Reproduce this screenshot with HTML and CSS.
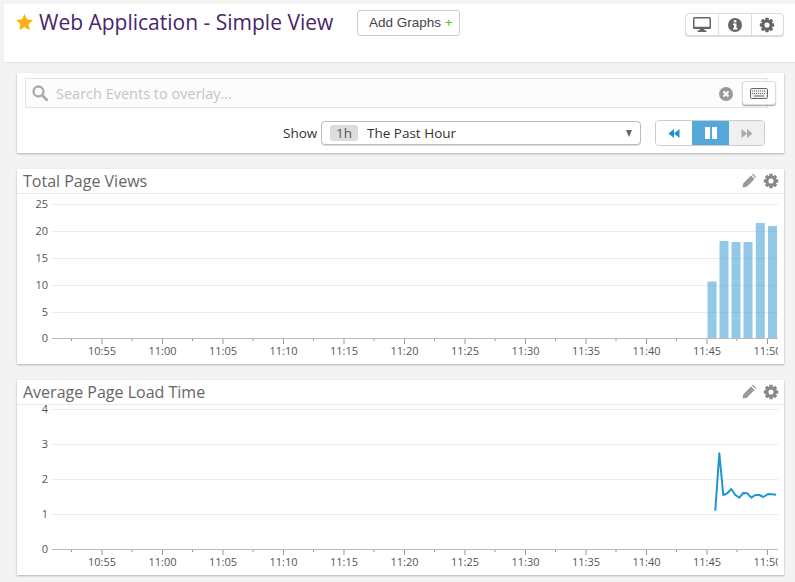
FILE: index.html
```html
<!DOCTYPE html>
<html lang="en">
<head>
<meta charset="utf-8">
<title>Web Application - Simple View</title>
<link rel="stylesheet" href="styles.css">
</head>
<body>
<svg class="defs" width="0" height="0" aria-hidden="true">
  <symbol id="gear" viewBox="0 0 20 20">
    <circle cx="10" cy="10" r="5.2" fill="none" stroke="currentColor" stroke-width="3.6"/>
    <g fill="currentColor">
      <rect x="7.9" y="1" width="4.2" height="18" rx=".7"/>
      <rect x="7.9" y="1" width="4.2" height="18" rx=".7" transform="rotate(45 10 10)"/>
      <rect x="7.9" y="1" width="4.2" height="18" rx=".7" transform="rotate(90 10 10)"/>
      <rect x="7.9" y="1" width="4.2" height="18" rx=".7" transform="rotate(135 10 10)"/>
    </g>
    <circle cx="10" cy="10" r="3.2" fill="var(--hole, #fff)"/>
  </symbol>
  <symbol id="pencil" viewBox="0 0 16 16">
    <path fill="currentColor" d="M.5 15.500l1-5L10.300 1.700l4 4L5.500 14.500zM11.300.7l.4-.3c.5-.4 1.100-.4 1.500 0l2.400 2.400c.4.4.4 1 0 1.500l-.3.4z"/>
  </symbol>
</svg>

<header class="topbar">
  <svg class="star" viewBox="0 0 18 17"><path fill="#fbb117" d="M9 0l2.700 5.700 6.300.8-4.600 4.300 1.200 6.200L9 14l-5.600 3 1.200-6.200L0 6.500l6.300-.8z"/></svg>
  <h1 class="page-title">Web Application - Simple View</h1>
  <button class="add-btn">Add Graphs <span class="plus">+</span></button>
  <div class="tool-group">
    <span class="tool">
      <svg width="18" height="15" viewBox="0 0 24 20"><path fill="#666" d="M2 0h20a2 2 0 0 1 2 2v12a2 2 0 0 1-2 2h-7l.5 2H18v2H6v-2h2.500l.5-2H2a2 2 0 0 1-2-2V2a2 2 0 0 1 2-2zm0 2v11h20V2z"/></svg>
    </span>
    <span class="tool">
      <svg width="14" height="14" viewBox="0 0 15 15"><circle cx="7.500" cy="7.500" r="7.500" fill="#666"/><rect x="6.200" y="2.300" width="2.800" height="2.400" fill="#fff"/><path fill="#fff" d="M5.400 6h3.700v4.600h1v1.600H5.400v-1.600h1V7.500h-1z"/></svg>
    </span>
    <span class="tool"><svg class="gear-lg"><use href="#gear"/></svg></span>
  </div>
</header>

<section class="card controls">
  <div class="search">
    <svg class="search-icon" viewBox="0 0 16 16"><circle cx="6.500" cy="6.500" r="5" fill="none" stroke="#aaa" stroke-width="2.300"/><path d="M10.200 10.200l4.500 4.500" stroke="#aaa" stroke-width="2.800" stroke-linecap="round"/></svg>
    <span class="placeholder">Search Events to overlay...</span>
    <svg class="clear-icon" viewBox="0 0 14 14"><circle cx="7" cy="7" r="7" fill="#999"/><path d="M4.500 4.500l5 5M9.500 4.500l-5 5" stroke="#fff" stroke-width="2"/></svg>
    <span class="kbd-btn">
      <svg width="18" height="11" viewBox="0 0 18 11"><rect x=".5" y=".5" width="17" height="10" rx="1" fill="#eee" stroke="#666"/><path d="M2 3h14M2 5.500h14" stroke="#666" stroke-dasharray="1 1"/><path d="M4 8h10" stroke="#666"/></svg>
    </span>
  </div>
  <div class="show-row">
    <span class="show-label">Show</span>
    <div class="select">
      <span class="pill">1h</span>
      <span class="select-text">The Past Hour</span>
      <span class="caret"></span>
    </div>
    <div class="player">
      <span class="pl pl-back"><svg width="12" height="11" viewBox="0 0 12 12"><path fill="#1f8fcf" d="M6 1v10L0 6zM12 1v10L6 6z"/></svg></span>
      <span class="pl pl-pause"><svg width="12" height="12" viewBox="0 0 12 12"><path fill="#fff" d="M0 0h5v12H0zM7 0h5v12H7z"/></svg></span>
      <span class="pl pl-next"><svg width="12" height="11" viewBox="0 0 12 12"><path fill="#aaa" d="M0 1v10l6-5zM6 1v10l6-5z"/></svg></span>
    </div>
  </div>
</section>

<section class="card graph">
  <div class="graph-head">
    <h2 class="graph-title">Total Page Views</h2>
    <svg class="pencil"><use href="#pencil"/></svg>
    <svg class="gear-sm"><use href="#gear"/></svg>
  </div>
  <svg class="plot" viewBox="17 194 767 170">
    <defs><clipPath id="clip1"><rect x="17" y="194" width="761" height="170"/></clipPath></defs>
    <g class="grid">
      <path d="M52 204.500H778M52 231.500H778M52 258.500H778M52 285.500H778M52 312.500H778"/>
    </g>
    <g class="ylab">
      <text x="48" y="208">25</text><text x="48" y="235">20</text><text x="48" y="262">15</text><text x="48" y="289">10</text><text x="48" y="316">5</text><text x="48" y="342">0</text>
    </g>
    <g class="bars">
      <rect x="707.500" y="281.500" width="9" height="57"/>
      <rect x="719.500" y="241" width="9" height="97.500"/>
      <rect x="731.500" y="242" width="9" height="96.500"/>
      <rect x="743.500" y="242" width="9" height="96.500"/>
      <rect x="755.800" y="223" width="9" height="115.500"/>
      <rect x="768" y="226" width="9" height="112.500"/>
    </g>
    <path class="axis" d="M52 338.500H778"/>
    <path class="ticks" d="M102 339v5M162.500 339v5M223 339v5M283.500 339v5M344 339v5M404.500 339v5M465 339v5M525.500 339v5M586 339v5M646.500 339v5M707 339v5M767.500 339v5M71.500 339v2M132 339v2M192.500 339v2M253 339v2M313.500 339v2M374 339v2M434.500 339v2M495 339v2M555.500 339v2M616 339v2M676.500 339v2M737 339v2"/>
    <g class="xlab" clip-path="url(#clip1)">
      <text x="102" y="355">10:55</text><text x="162.500" y="355">11:00</text><text x="223" y="355">11:05</text><text x="283.500" y="355">11:10</text><text x="344" y="355">11:15</text><text x="404.500" y="355">11:20</text><text x="465" y="355">11:25</text><text x="525.500" y="355">11:30</text><text x="586" y="355">11:35</text><text x="646.500" y="355">11:40</text><text x="707" y="355">11:45</text><text x="767.500" y="355">11:50</text>
    </g>
  </svg>
</section>

<section class="card graph">
  <div class="graph-head">
    <h2 class="graph-title">Average Page Load Time</h2>
    <svg class="pencil"><use href="#pencil"/></svg>
    <svg class="gear-sm"><use href="#gear"/></svg>
  </div>
  <svg class="plot" viewBox="17 405 767 170">
    <defs><clipPath id="clip2"><rect x="17" y="400" width="761" height="175"/></clipPath></defs>
    <g class="grid">
      <path d="M52 409.500H778M52 444.500H778M52 479.500H778M52 514.500H778"/>
    </g>
    <g class="ylab">
      <text x="48" y="413">4</text><text x="48" y="448">3</text><text x="48" y="483">2</text><text x="48" y="518">1</text><text x="48" y="553">0</text>
    </g>
    <path class="axis" d="M52 549.500H778"/>
    <path class="ticks" d="M102 550v5M162.500 550v5M223 550v5M283.500 550v5M344 550v5M404.500 550v5M465 550v5M525.500 550v5M586 550v5M646.500 550v5M707 550v5M767.500 550v5M71.500 550v2M132 550v2M192.500 550v2M253 550v2M313.500 550v2M374 550v2M434.500 550v2M495 550v2M555.500 550v2M616 550v2M676.500 550v2M737 550v2"/>
    <polyline class="line" points="715.300,510.700 719.300,453.300 723.300,495 727.300,493.300 731.300,489 735.300,495 739.300,497.700 743.300,493 747.300,493.300 751.300,497.700 755.300,495 759.300,495 763.300,497 768,494 772,494.300 776,494.700"/>
    <g class="xlab" clip-path="url(#clip2)">
      <text x="102" y="566">10:55</text><text x="162.500" y="566">11:00</text><text x="223" y="566">11:05</text><text x="283.500" y="566">11:10</text><text x="344" y="566">11:15</text><text x="404.500" y="566">11:20</text><text x="465" y="566">11:25</text><text x="525.500" y="566">11:30</text><text x="586" y="566">11:35</text><text x="646.500" y="566">11:40</text><text x="707" y="566">11:45</text><text x="767.500" y="566">11:50</text>
    </g>
  </svg>
</section>
</body>
</html>
```

FILE: styles.css
```css
* { box-sizing: border-box; }
html, body { height: 100%; overflow: hidden; }
body {
  margin: 0;
  padding: 4px 0 0 0;
  background: #f3f3f3;
  font-family: "Open Sans", "Liberation Sans", sans-serif;
  color: #444;
}
.defs { position: absolute; }

.topbar {
  display: flex;
  align-items: flex-start;
  height: 58px;
  margin: 0 0 11px 4px;
  background: #fff;
  padding: 5px 11px 0 12px;
  box-shadow: 0 1px 1px rgba(0,0,0,.06);
}
.star { width: 17px; height: 16px; margin-top: 5px; }
.page-title {
  margin: 0 0 0 6px;
  font-size: 21px;
  line-height: 26px;
  font-weight: 400;
  color: #47256b;
  white-space: nowrap;
}
.add-btn {
  margin: 1px 0 0 24px;
  height: 26px;
  width: 103px;
  padding: 0 0 0 4px;
  background: #fff;
  border: 1px solid #ccc;
  border-radius: 3px;
  font: 400 13.500px/24px "Liberation Sans", Arial, sans-serif;
  color: #444;
}
.plus { color: #5cb82e; font-weight: 400; }
.tool-group {
  display: flex;
  margin: 4px 0 0 auto;
  height: 23px;
  border: 1px solid #ddd;
  border-radius: 4px;
  box-shadow: 0 1px 1px rgba(0,0,0,.15);
  background: #fff;
}
.tool {
  width: 32.300px;
  display: flex;
  align-items: center;
  justify-content: center;
  border-left: 1px solid #ddd;
}
.tool:first-child { border-left: 0; }
.gear-lg { width: 16px; height: 16px; color: #666; }

.card {
  margin: 0 11px 16px 17px;
  background: #fff;
  box-shadow: 0 1px 2px rgba(0,0,0,.28);
}
.controls { height: 80px; padding: 5px 8px 0; }
.search {
  display: flex;
  align-items: center;
  height: 30px;
  margin-right: 8px;
  background: #fcfcfc;
  border: 1px solid #e2e2e2;
  padding: 0 0 0 6px;
  position: relative;
}
.search-icon { width: 16px; height: 16px; }
.placeholder {
  margin-left: 8px;
  font-size: 14.500px;
  color: #c4c4c4;
}
.clear-icon { width: 14px; height: 14px; margin-left: auto; margin-right: 34px; position: relative; top: 1px; }
.kbd-btn {
  position: absolute;
  right: -9px;
  top: 2px;
  width: 34px;
  height: 24px;
  background: #fff;
  border: 1px solid #ddd;
  border-radius: 3px;
  box-shadow: 0 1px 1px rgba(0,0,0,.35);
  display: flex;
  align-items: center;
  justify-content: center;
}
.show-row { display: flex; align-items: center; margin-top: 12px; }
.show-label { margin-left: 258px; font-size: 13.500px; color: #333; width: 38px; }
.select {
  display: flex;
  align-items: center;
  width: 320px;
  height: 24px;
  border: 1px solid #bbb;
  border-radius: 4px;
  background: #fff;
  padding: 0 8px;
  box-shadow: 0 1px 0 #ddd;
}
.pill {
  width: 28px;
  height: 16px;
  background: #ddd;
  border-radius: 2px;
  text-align: center;
  font-size: 13.500px;
  line-height: 16px;
  color: #555;
}
.select-text { margin-left: 9px; font-size: 13.500px; color: #333; }
.caret {
  margin-left: auto;
  border-top: 7px solid #666;
  border-left: 3.500px solid transparent;
  border-right: 3.500px solid transparent;
}
.player {
  display: flex;
  margin-left: 14px;
  height: 26px;
  border-radius: 4px;
  overflow: hidden;
  border: 1px solid #ccc;
}
.pl { width: 36px; display: flex; align-items: center; justify-content: center; }
.pl-back { background: #fff; }
.pl-pause { background: #55a9d8; width: 37px; margin: -1px 0; }
.pl-next { background: #f0f0f0; width: 35px; }

.graph { height: 195px; }
.graph-head {
  display: flex;
  align-items: center;
  height: 25px;
  padding: 0 5px 0 6px;
  border-bottom: 1px solid #eaeaea;
}
.graph-title {
  margin: 0 auto 0 0;
  font-size: 16px;
  line-height: 16px;
  font-weight: 400;
  color: #666;
}
.pencil { width: 14px; height: 14px; color: #999; margin-right: 7px; }
.gear-sm { width: 16px; height: 16px; color: #888; }
.plot { display: block; width: 767px; height: 170px; overflow: visible; }

.grid path { stroke: #ececec; stroke-width: 1; fill: none; }
.axis { stroke: #bbb; stroke-width: 1; fill: none; }
.ticks { stroke: #999; stroke-width: 1; fill: none; }
.ylab text { font-size: 11px; fill: #555; text-anchor: end; }
.xlab text { font-size: 11px; fill: #555; text-anchor: middle; }
.bars rect { fill: #4ba3d6; fill-opacity: .6; }
.line { fill: none; stroke: #1f96d2; stroke-width: 2; stroke-linejoin: round; }
```
